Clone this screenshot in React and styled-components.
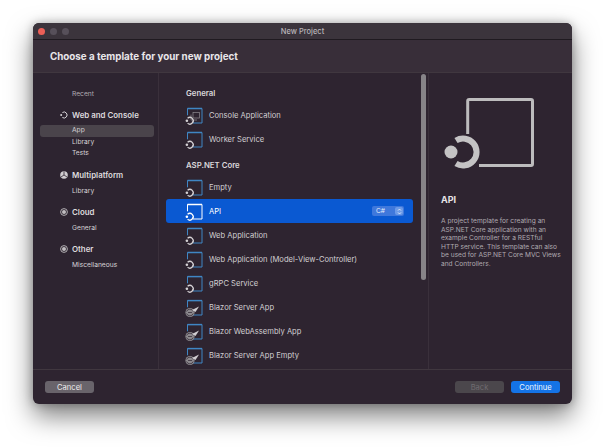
import React from "react";
import styled, { createGlobalStyle } from "styled-components";

const Global = createGlobalStyle`
  html, body { margin: 0; padding: 0; background: #fff; }
  body { width: 604px; height: 448px; overflow: hidden; font-family: Inter, "Liberation Sans", sans-serif; }
`;

const Page = styled.div`
  width: 604px;
  height: 448px;
  padding: 23px 32px 44px 33px;
  box-sizing: border-box;
`;

const Win = styled.div`
  height: 381px;
  border-radius: 6px;
  background: #2e2430;
  box-shadow: 0 12px 26px rgba(0, 0, 0, 0.5), 0 0 10px rgba(0, 0, 0, 0.28);
  display: flex;
  flex-direction: column;
  overflow: hidden;
  color: #e6e3e6;
`;

const TitleBar = styled.div`
  height: 16px;
  flex: none;
  background: #3b343c;
  border-bottom: 1px solid #1f1a20;
  display: flex;
  align-items: center;
  padding-left: 5px;
  gap: 5px;
  position: relative;
`;

const Light = styled.span`
  width: 7px;
  height: 7px;
  border-radius: 50%;
  background: ${(p) => p.$c};
`;

const WinTitle = styled.div`
  position: absolute;
  left: 0;
  right: 0;
  text-align: center;
  font-size: 7.5px;
  font-weight: 500;
  color: #b9b5b9;
`;

const Header = styled.div`
  height: 32px;
  flex: none;
  background: #382e39;
  border-bottom: 1px solid #40373f;
  display: flex;
  align-items: center;
  padding-left: 17px;
  font-size: 9.8px;
  font-weight: 700;
  color: #e9e6e9;
`;

const Body = styled.div`
  height: 296px;
  flex: none;
  display: flex;
  border-bottom: 1px solid #40373f;
`;

const Side = styled.div`
  width: 126px;
  flex: none;
  border-right: 1px solid #3a303b;
  padding: 16px 4px 0 7px;
  box-sizing: border-box;
  background: #2d2430;
`;

const SideItem = styled.div`
  height: 11.5px;
  line-height: 11.5px;
  padding-left: 32px;
  margin-bottom: ${(p) => (p.$gap ? p.$gap : 0)}px;
  font-size: 6.7px;
  color: ${(p) => (p.$muted ? "#b0abb0" : "#d6d3d6")};
  border-radius: 3px;
  background: ${(p) => (p.$active ? "#4a444b" : "transparent")};
`;

const SideHead = styled.div`
  height: 14px;
  margin-bottom: 3.5px;
  display: flex;
  align-items: center;
  gap: 4px;
  padding-left: 20px;
  font-size: 7.9px;
  font-weight: 600;
  color: #dedbde;
`;

const List = styled.div`
  width: 269px;
  flex: none;
  position: relative;
  overflow: hidden;
  padding: 13px 15px 0 7px;
  box-sizing: border-box;
`;

const ListHead = styled.div`
  height: 14px;
  line-height: 14px;
  padding-left: 20px;
  margin-top: ${(p) => p.$mt || 0}px;
  margin-bottom: 3px;
  font-size: 7.8px;
  font-weight: 600;
  color: #dad7da;
`;

const Row = styled.div`
  height: 24px;
  flex: none;
  display: flex;
  align-items: center;
  padding-left: 19px;
  gap: 6px;
  border-radius: 3px;
  font-size: 7.6px;
  color: ${(p) => (p.$sel ? "#fff" : "#d2cfd2")};
  background: ${(p) => (p.$sel ? "#0a59d2" : "transparent")};
  position: relative;
`;

const RowName = styled.span`
  flex: 1;
`;

const RowIcon = styled.svg`
  flex: none;
  overflow: visible;
`;

const Lang = styled.div`
  width: 32px;
  height: 10px;
  margin-right: 9px;
  border-radius: 2px;
  background: #3f78dc;
  color: #e4ecfb;
  font-size: 6.6px;
  display: flex;
  align-items: center;
  justify-content: space-between;
  padding: 0 1px 0 4px;
  box-sizing: border-box;
`;

const LangStep = styled.span`
  width: 8px;
  height: 8px;
  border-radius: 2px;
  background: #6b9ae8;
  display: flex;
  align-items: center;
  justify-content: center;
`;

const ScrollThumb = styled.div`
  position: absolute;
  right: 2px;
  top: 1px;
  bottom: 89px;
  width: 5px;
  border-radius: 3px;
  background: #878488;
`;

const Detail = styled.div`
  flex: 1;
  border-left: 1px solid #3a303b;
  padding: 23px 0 0 12px;
  box-sizing: border-box;
`;

const DetailIcon = styled.svg`
  display: block;
  width: 100px;
  height: 76px;
`;

const DetailName = styled.div`
  margin-top: 22px;
  font-size: 9px;
  line-height: 11px;
  font-weight: 700;
  color: #e6e3e6;
`;

const DetailText = styled.div`
  margin-top: 12px;
  font-size: 6.6px;
  line-height: 8.6px;
  color: #b0abb0;
  white-space: pre;
`;

const Footer = styled.div`
  flex: 1;
  display: flex;
  align-items: center;
  padding: 0 12px;
  gap: 7px;
`;

const Btn = styled.div`
  width: 49px;
  height: 12px;
  border-radius: 3px;
  display: flex;
  align-items: center;
  justify-content: center;
  font-size: 7.6px;
  background: ${(p) => p.$bg};
  color: ${(p) => p.$fg};
`;

const Spacer = styled.div`
  flex: 1;
`;

// small template icon, blue window with a ring in the corner
function TemplateIcon({ sel, blazor, hasConsole }) {
  const line = sel ? "#ffffff" : "#3f86c4";
  const ring = sel ? "#ffffff" : "#d5d2d5";
  return (
    <RowIcon width="18" height="20" viewBox="0 0 18 20" fill="none">
      <path d="M2.5 10.3V3.5H17V18H8" stroke={line} strokeWidth="1" />
      <path d="M2.5 3.6H17" stroke={line} strokeWidth="1.5" />
      {hasConsole && (
        <g stroke="#8f8b90" strokeWidth="0.7">
          <rect x="8" y="7.5" width="6.5" height="5.5" />
          <path d="M6 9.5V15H12" />
        </g>
      )}
      {blazor ? (
        <g>
          <circle cx="5" cy="15.5" r="4.6" fill="#8c898d" />
          <path d="M1.6 14.5a3.5 3.5 0 0 1 6.6 0M1.6 16.5a3.5 3.5 0 0 0 6.6 0M3 15.5h4" stroke="#2e2430" strokeWidth="0.7" />
          <path d="M7 13L14 9.5 10.5 15z" fill="#d0cdd0" />
        </g>
      ) : (
        <g>
          <path d="M2.6 13.3a3.3 3.3 0 1 1 0 4.8" stroke={ring} strokeWidth="1.3" />
          <circle cx="1.9" cy="15.8" r="1.3" fill={ring} />
        </g>
      )}
    </RowIcon>
  );
}

function WebIcon() {
  return (
    <svg width="8" height="8" viewBox="0 0 8 8" fill="none">
      <path d="M2.4 1.5a3 3 0 1 1 0 5" stroke="#d8d5d8" strokeWidth="1" />
      <circle cx="1.2" cy="4" r="1" fill="#d8d5d8" />
    </svg>
  );
}

function MultiIcon() {
  return (
    <svg width="8" height="8" viewBox="0 0 8 8">
      <circle cx="4" cy="4" r="3.8" fill="#d0cdd0" />
      <path d="M4 4V0.6M4 4L1 6M4 4l3 2" stroke="#2e2430" strokeWidth="0.8" />
    </svg>
  );
}

function DotIcon() {
  return (
    <svg width="8" height="8" viewBox="0 0 8 8" fill="none">
      <circle cx="4" cy="4" r="3.4" stroke="#c0bdc0" strokeWidth="0.9" />
      <circle cx="4" cy="4" r="2" fill="#c0bdc0" />
    </svg>
  );
}

const templates = [
  { name: "Empty" },
  { name: "API", sel: true },
  { name: "Web Application" },
  { name: "Web Application (Model-View-Controller)" },
  { name: "gRPC Service" },
  { name: "Blazor Server App", blazor: true },
  { name: "Blazor WebAssembly App", blazor: true },
  { name: "Blazor Server App Empty", blazor: true },
];

export default function App() {
  return (
    <Page>
      <Global />
      <Win>
        <TitleBar>
          <Light $c="#ec5f57" />
          <Light $c="#57505a" />
          <Light $c="#57505a" />
          <WinTitle>New Project</WinTitle>
        </TitleBar>
        <Header>Choose a template for your new project</Header>
        <Body>
          <Side>
            <SideItem $muted $gap={7}>Recent</SideItem>
            <SideHead><WebIcon />Web and Console</SideHead>
            <SideItem $active>App</SideItem>
            <SideItem>Library</SideItem>
            <SideItem $gap={8.5}>Tests</SideItem>
            <SideHead><MultiIcon />Multiplatform</SideHead>
            <SideItem $gap={8}>Library</SideItem>
            <SideHead><DotIcon />Cloud</SideHead>
            <SideItem $gap={8}>General</SideItem>
            <SideHead><DotIcon />Other</SideHead>
            <SideItem>Miscellaneous</SideItem>
          </Side>
          <List>
            <ListHead>General</ListHead>
            <Row><TemplateIcon hasConsole /><RowName>Console Application</RowName></Row>
            <Row><TemplateIcon /><RowName>Worker Service</RowName></Row>
            <ListHead $mt={7}>ASP.NET Core</ListHead>
            {templates.map((t) => (
              <Row key={t.name} $sel={t.sel}>
                <TemplateIcon sel={t.sel} blazor={t.blazor} />
                <RowName>{t.name}</RowName>
                {t.sel && (
                  <Lang>
                    C#
                    <LangStep>
                      <svg width="5" height="7" viewBox="0 0 5 7" fill="none">
                        <path d="M1 2.6L2.5 1 4 2.6M1 4.4L2.5 6 4 4.4" stroke="#fff" strokeWidth="0.7" />
                      </svg>
                    </LangStep>
                  </Lang>
                )}
              </Row>
            ))}
            <ScrollThumb />
          </List>
          <Detail>
            <DetailIcon viewBox="0 0 100 76" fill="none">
              <path d="M26.7 38V5A1.5 1.5 0 0 1 28.2 3.5H90A1.5 1.5 0 0 1 91.5 5V68A1.5 1.5 0 0 1 90 69.5H38" stroke="#bdbcbd" strokeWidth="3" />
              <path d="M15 44.5A13.5 13.5 0 1 1 15 67.5" stroke="#c4c3c4" strokeWidth="6" />
              <circle cx="10" cy="56" r="6.5" fill="#c4c3c4" />
            </DetailIcon>
            <DetailName>API</DetailName>
            <DetailText>{"A project template for creating an\nASP.NET Core application with an\nexample Controller for a RESTful\nHTTP service. This template can also\nbe used for ASP.NET Core MVC Views\nand Controllers."}</DetailText>
          </Detail>
        </Body>
        <Footer>
          <Btn $bg="#69646b" $fg="#eeeced">Cancel</Btn>
          <Spacer />
          <Btn $bg="#4b474c" $fg="#6f6b70">Back</Btn>
          <Btn $bg="#1473e6" $fg="#f2f7fe">Continue</Btn>
        </Footer>
      </Win>
    </Page>
  );
}
